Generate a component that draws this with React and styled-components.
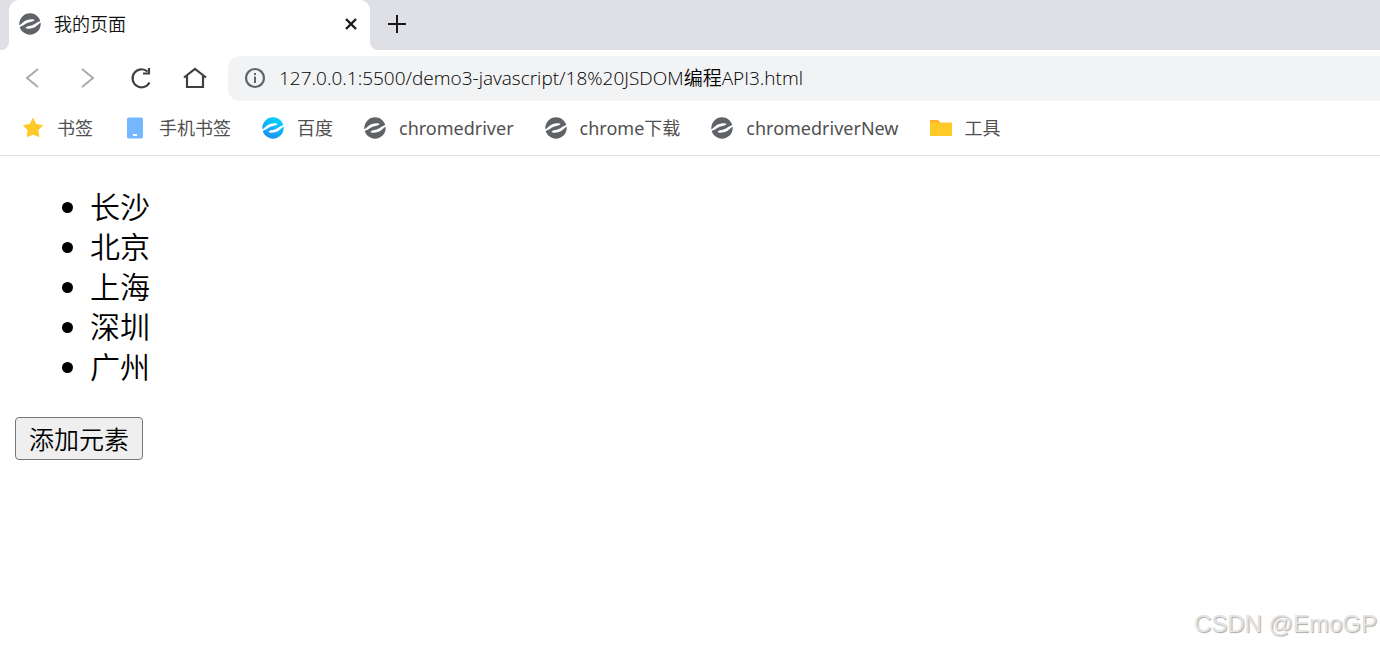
import React from "react";
import styled, { createGlobalStyle } from "styled-components";

const GlobalStyle = createGlobalStyle`
  * {
    box-sizing: border-box;
  }
  body {
    margin: 0;
    background: #fff;
    font-family: "Open Sans", "Noto Sans CJK SC", sans-serif;
    overflow: hidden;
  }
`;

const Window = styled.div`
  display: flex;
  flex-direction: column;
  min-height: 100vh;
`;

const TabStrip = styled.div`
  display: flex;
  height: 50px;
  background: #dfe0e6;
`;

const StripEdge = styled.div`
  width: 9px;
  background: #fff;
  &::before {
    content: "";
    display: block;
    height: 100%;
    background: #dfe0e6;
    border-bottom-right-radius: 8px;
  }
`;

const StripRest = styled.div`
  flex: 1;
  display: flex;
  align-items: center;
  padding: 0 0 2px 16px;
  background: #fff;
  position: relative;
  z-index: 0;
  &::before {
    content: "";
    position: absolute;
    inset: 0;
    z-index: -1;
    background: #dfe0e6;
    border-bottom-left-radius: 8px;
  }
`;

const TabBack = styled.div`
  background: #dfe0e6;
`;

const Tab = styled.div`
  display: flex;
  align-items: center;
  width: 361px;
  height: 100%;
  padding: 0 12px 2px 9px;
  background: #fff;
  border-radius: 10px 10px 0 0;
`;

const TabTitle = styled.span`
  flex: 1;
  padding-left: 12px;
  font-size: 18px;
  line-height: 24px;
  font-weight: 350;
  color: #111;
`;

const IconButton = styled.button`
  display: flex;
  padding: 0;
  border: none;
  background: none;
  color: ${props => props.color || "#404040"};
`;

const Toolbar = styled.div`
  display: flex;
  align-items: center;
  height: 56px;
  padding-left: 21px;
  gap: 30px;
`;

const AddressBox = styled.label`
  flex: 1;
  display: flex;
  align-items: center;
  gap: 13px;
  height: 45px;
  margin-left: -9px;
  padding-left: 16px;
  background: #f1f3f4;
  border-radius: 12px 0 0 12px;
`;

const AddressInput = styled.input`
  flex: 1;
  padding: 0;
  border: none;
  outline: none;
  background: none;
  font-family: inherit;
  font-size: 19px;
  line-height: 24px;
  font-weight: 350;
  color: #000;
`;

const Bookmarks = styled.nav`
  display: flex;
  align-items: center;
  height: 50px;
  padding: 0 21px 6px;
  gap: 30px;
  border-bottom: 1px solid #dedede;
`;

const Bookmark = styled.a`
  display: flex;
  align-items: center;
  gap: 12px;
  font-family: "Noto Sans", "Noto Sans CJK SC", sans-serif;
  font-size: 18px;
  line-height: 24px;
  color: #505050;
  text-decoration: none;
  white-space: nowrap;
`;

const Page = styled.main`
  flex: 1;
  display: flex;
  flex-direction: column;
  align-items: flex-start;
  padding: 31px 15px 0;
`;

const CityList = styled.ul`
  margin: 0 0 30px;
  padding-left: 75px;
  font-size: 30px;
  line-height: 40px;
  font-weight: 350;
  color: #000;
`;

const AddButton = styled.button`
  height: 43px;
  padding: 0 13px;
  border: 1px solid #767676;
  border-radius: 4px;
  background: #efefef;
  font-family: inherit;
  font-size: 25px;
  line-height: 32px;
  font-weight: 350;
  color: #000;
`;

const Watermark = styled.div`
  position: absolute;
  right: 3px;
  bottom: 8px;
  font-family: "Liberation Sans", sans-serif;
  font-size: 24px;
  line-height: 30px;
  color: #e4e4e4;
  text-shadow: 1px 1px 1px #aaa;
`;

const EIcon = ({ blue }) => (
  <svg width="24" height="22" viewBox="-1 0 24 22" aria-hidden="true">
    <defs>
      <linearGradient id="eBlue" x1="0.8" y1="0" x2="0.3" y2="1">
        <stop offset="0" stopColor="#00d8ff" />
        <stop offset="1" stopColor="#1e8cf0" />
      </linearGradient>
    </defs>
    <circle cx="11" cy="11" r="10.7" fill={blue ? "url(#eBlue)" : "#5f6368"} />
    <path
      d="M-1 13C2.500 11.500 4 8.500 8 7C10.500 6.200 14.500 6 15.500 7C14.800 8.600 12 8.900 9.500 9.500C6 10.400 4 13.300 -1 14.500Z"
      fill="#fff"
    />
    <path
      d="M23 9C19.500 10.500 18 13.500 14 15C11.500 15.800 7.500 16 6.500 15C7.200 13.400 10 13.100 12.500 12.500C16 11.600 18 8.700 23 7.500Z"
      fill="#fff"
    />
  </svg>
);

const LineIcon = ({ d, width = 22, stroke = 2 }) => (
  <svg
    width={width}
    height="24"
    viewBox={`0 0 ${width} 24`}
    fill="none"
    stroke="currentColor"
    strokeWidth={stroke}
    aria-hidden="true"
  >
    <path d={d} />
  </svg>
);

const InfoIcon = () => (
  <svg width="22" height="22" viewBox="0 0 22 22" aria-hidden="true">
    <circle cx="11" cy="11" r="9" fill="none" stroke="#5f6368" strokeWidth="2.2" />
    <path d="M10 6h2v2h-2zM10 9.500h2V16h-2z" fill="#5f6368" />
  </svg>
);

const StarIcon = () => (
  <svg width="24" height="22" viewBox="0 0 24 22" aria-hidden="true">
    <path
      d="M12 1.500l3 6 6.500 1-4.700 4.600 1.100 6.500L12 17l-5.900 2.600 1.100-6.500L2.500 8.500l6.500-1z"
      fill="#ffca28"
      stroke="#ffca28"
      strokeWidth="1"
      strokeLinejoin="round"
    />
  </svg>
);

const PhoneIcon = () => (
  <svg width="24" height="22" viewBox="0 0 24 22" aria-hidden="true">
    <rect x="4" y="0.500" width="16" height="21" rx="1.500" fill="#74b9ff" />
    <rect x="10" y="17" width="4" height="2" fill="#fff" />
  </svg>
);

const FolderIcon = () => (
  <svg width="24" height="22" viewBox="0 0 24 22" aria-hidden="true">
    <path d="M1 3h8l2 2v4H1z" fill="#ffb02e" />
    <path d="M1 5.500h21a1 1 0 0 1 1 1V18a1 1 0 0 1-1 1H2a1 1 0 0 1-1-1z" fill="#ffca28" />
  </svg>
);

const bookmarks = [
  { text: "书签", icon: <StarIcon /> },
  { text: "手机书签", icon: <PhoneIcon /> },
  { text: "百度", icon: <EIcon blue /> },
  { text: "chromedriver", icon: <EIcon /> },
  { text: "chrome下载", icon: <EIcon /> },
  { text: "chromedriverNew", icon: <EIcon /> },
  { text: "工具", icon: <FolderIcon /> }
];

const cities = ["长沙", "北京", "上海", "深圳", "广州"];

const App = () => {
  return (
    <Window>
      <GlobalStyle />
      <TabStrip>
        <StripEdge />
        <TabBack>
          <Tab>
            <EIcon />
            <TabTitle>我的页面</TabTitle>
            <IconButton color="#1a1a1a" aria-label="Close tab">
              <LineIcon width={14} stroke={2.4} d="M2 7L12 17M12 7L2 17" />
            </IconButton>
          </Tab>
        </TabBack>
        <StripRest>
          <IconButton color="#1a1a1a" aria-label="New tab">
            <LineIcon width={22} d="M11 3V21M2 12H20" />
          </IconButton>
        </StripRest>
      </TabStrip>
      <Toolbar>
        <IconButton color="#aaa" aria-label="Back">
          <LineIcon width={24} d="M17 3L6 12L17 21" />
        </IconButton>
        <IconButton color="#aaa" aria-label="Forward">
          <LineIcon width={24} d="M7 3L18 12L7 21" />
        </IconButton>
        <IconButton aria-label="Reload">
          <LineIcon
            width={24}
            stroke={2.2}
            d="M20.500 16.500A9 9 0 1 1 18.500 5.500M20 2V7.500H14"
          />
        </IconButton>
        <IconButton aria-label="Home">
          <LineIcon width={24} stroke={2.2} d="M1 11.500L12 3L23 11.500M4 9.500V21H20V9.500" />
        </IconButton>
        <AddressBox>
          <InfoIcon />
          <AddressInput
            aria-label="Address"
            defaultValue="127.0.0.1:5500/demo3-javascript/18%20JSDOM编程API3.html"
          />
        </AddressBox>
      </Toolbar>
      <Bookmarks>
        {bookmarks.map(({ text, icon }) => (
          <Bookmark key={text} href="#">
            {icon}
            {text}
          </Bookmark>
        ))}
      </Bookmarks>
      <Page>
        <CityList>
          {cities.map(city => (
            <li key={city}>{city}</li>
          ))}
        </CityList>
        <AddButton>添加元素</AddButton>
      </Page>
      <Watermark>CSDN @EmoGP</Watermark>
    </Window>
  );
};

export default App;
